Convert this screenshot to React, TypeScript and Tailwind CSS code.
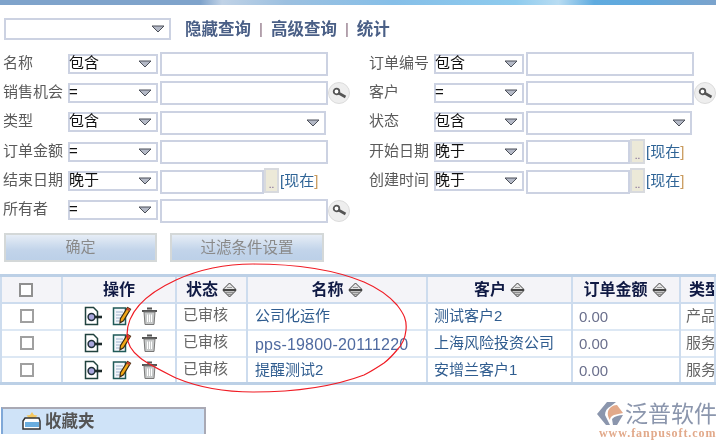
import React from "react";

const cjk = "font-['Liberation_Sans','Noto_Sans_CJK_SC',sans-serif]";

const Arrow = () => (
  <svg width="14" height="8" viewBox="0 0 14 8" className="shrink-0">
    <path d="M1 1h12L7 7z" fill="#b4b9c6" stroke="#4b4f58" strokeWidth="1" />
  </svg>
);

const Select = ({ value }: { value: string }) => (
  <div className="-mt-[1px] flex h-[20px] w-[90px] shrink-0 items-center justify-between border-2 border-[#ccd2e2] bg-white pr-[4px] text-[15px] leading-none text-[#111]">
    <span className="-ml-[1px] -mt-[3px]">{value}</span>
    <Arrow />
  </div>
);

const KeyBtn = () => (
  <div className="flex h-[22px] w-[22px] shrink-0 items-center justify-center rounded-full border border-[#dcdcdc] bg-[#eeeeee]">
    <svg width="15" height="13" viewBox="0 0 15 13">
      <circle cx="4.500" cy="4.500" r="2.800" fill="#fff" stroke="#555" strokeWidth="1.800" />
      <path d="M6.500 6l7 4" stroke="#555" strokeWidth="2.600" />
    </svg>
  </div>
);

const DateBtn = () => (
  <>
    <div className="-mt-[2px] flex h-[25px] w-[15px] shrink-0 items-end justify-center border-2 border-[#d8dade] bg-[#ece9d8] text-[10px] leading-[12px] text-[#71598a]">..</div>
    <span className="ml-[1px] text-[15px] text-[#2f6496]">
      [现在<span className="text-[#c99a5c]">]</span>
    </span>
  </>
);

type Row = { label: string; op: string; kind?: "key" | "drop" | "date" };

const Field = ({ label, op, kind }: Row) => (
  <div className="flex h-[24px] items-center">
    <span className="-mt-[4px] w-[65px] shrink-0 whitespace-nowrap text-[15px] leading-none text-[#5a5a5a]">{label}</span>
    <Select value={op} />
    <div
      className={`ml-[2px] flex h-[24px] shrink-0 items-center justify-end border-2 border-[#ccd2e2] bg-white pr-[4px] ${
        kind === "date" ? "w-[104px]" : kind === "drop" ? "w-[166px]" : "w-[168px]"
      }`}
    >
      {kind === "drop" && <Arrow />}
    </div>
    {kind === "key" && <KeyBtn />}
    {kind === "date" && <DateBtn />}
  </div>
);

const left: Row[] = [
  { label: "名称", op: "包含" },
  { label: "销售机会", op: "=", kind: "key" },
  { label: "类型", op: "包含", kind: "drop" },
  { label: "订单金额", op: "=" },
  { label: "结束日期", op: "晚于", kind: "date" },
  { label: "所有者", op: "=", kind: "key" },
];

const right: Row[] = [
  { label: "订单编号", op: "包含" },
  { label: "客户", op: "=", kind: "key" },
  { label: "状态", op: "包含", kind: "drop" },
  { label: "开始日期", op: "晚于", kind: "date" },
  { label: "创建时间", op: "晚于", kind: "date" },
];

const Sort = () => (
  <svg width="15" height="16" viewBox="0 0 15 16" className="ml-[4px] inline-block shrink-0">
    <path d="M7.500 1L14 7.500H1z" fill="#e4e4e4" stroke="#444" />
    <path d="M7.500 15L14 8.500H1z" fill="#c4c4c4" stroke="#444" />
    <path d="M5 5.500h5M3.500 10.500h8M5 12.500h5" stroke="#777" strokeWidth="0.700" />
  </svg>
);

const ViewIcon = () => (
  <svg width="20" height="20" viewBox="0 0 20 20" className="block">
    <path d="M2.500 1.500h8l4 4v13h-12z" fill="#fff" stroke="#20423e" strokeWidth="1.500" />
    <circle cx="8.500" cy="11" r="3.400" fill="#a9a6dc" stroke="#20303a" strokeWidth="1.500" />
    <path d="M12 11h7" stroke="#1d2a2a" strokeWidth="2.600" />
  </svg>
);

const EditIcon = () => (
  <svg width="20" height="20" viewBox="0 0 20 20" className="block">
    <path d="M1.500 2h12v16.500h-12z" fill="#f4f7fb" stroke="#1f5a58" strokeWidth="1.500" />
    <path d="M4 6h7M4 9h6M4 12h5M4 15h5" stroke="#9db2cc" />
    <path d="M15.500 1.500l3 1.800-7 11.500-3.500 2 .4-4z" fill="#f2a818" stroke="#3a2a10" strokeWidth="1.200" />
    <path d="M15.500 1.500l3 1.800-1.200 2-3-1.800z" fill="#c8452c" />
  </svg>
);

const TrashIcon = () => (
  <svg width="17" height="20" viewBox="0 0 17 20" className="block">
    <path d="M6 2.500h5M1 5h15" stroke="#555" strokeWidth="2" />
    <path d="M3 6h11l-1 12.500H4z" fill="#c6c8c8" stroke="#777" />
    <path d="M6.500 8.500v7.500M8.500 8.500v7.500M10.500 8.500v7.500" stroke="#fff" />
  </svg>
);

const rows = [
  { name: "公司化运作", customer: "测试客户2", type: "产品", nameClass: "text-[#2f5c8f]" },
  { name: "pps-19800-20111220", customer: "上海风险投资公司", type: "服务", nameClass: "text-[#4f6aa0] text-[16px] tracking-[0.2px] pt-[3px]" },
  { name: "提醒测试2", customer: "安增兰客户1", type: "服务", nameClass: "text-[#2f5c8f]" },
];

const th = "border-x-2 border-[#cddcee] pt-[1px] font-bold text-[#101a44] text-[16px]";
const td = "border-x-2 border-[#cddcee]";

export default function App() {
  return (
    <div className={`relative h-[446px] w-[727px] overflow-hidden bg-white blur-[0.4px] ${cjk}`}>
      <div className="w-[716px]">
        <div className="h-[5px] bg-[linear-gradient(90deg,#7fa3cb_0%,#7fa3cb_28%,#c0d2e6_31%,#9cc0e0_40%,#86bfe8_55%,#8ecbee_72%,#b8dcf2_78%,#5fabdf_83%,#62a8dc_90%,#7ba3cc_100%)]" />

        <div className="mt-[13px] flex h-[22px] items-center pl-[4px]">
          <div className="flex h-[22px] w-[167px] items-center justify-end border-2 border-[#ccd2e2] pr-[4px]">
            <Arrow />
          </div>
          <div className="ml-[14px] flex items-center text-[16.500px] font-bold text-[#4a5f86]">
            <span>隐藏查询</span>
            <span className="mx-[8px] text-[15px] font-normal text-[#8a6f80]">|</span>
            <span>高级查询</span>
            <span className="mx-[8px] text-[15px] font-normal text-[#8a6f80]">|</span>
            <span>统计</span>
          </div>
        </div>

        <div className="mt-[12px] flex h-[176px] pl-[3px]">
          <div className="flex w-[369px] flex-col gap-[5.400px]">
            {left.map((f) => (
              <Field key={f.label} {...f} />
            ))}
          </div>
          <div className="flex flex-col gap-[5.400px]">
            {right.map((f) => (
              <Field key={f.label} {...f} />
            ))}
          </div>
        </div>

        <div className="mt-[5px] flex gap-[13px] pl-[4px]">
          <button className="h-[29px] w-[153px] border-2 border-[#d4d8d8] bg-[linear-gradient(180deg,#e6edf6_0%,#c2d4ea_60%,#bcd0e8_100%)] text-[15px] text-[#8a8a8a]">确定</button>
          <button className="h-[29px] w-[154px] border-2 border-[#d4d8d8] bg-[linear-gradient(180deg,#e6edf6_0%,#c2d4ea_60%,#bcd0e8_100%)] text-[15.500px] text-[#8a8a8a]">过滤条件设置</button>
        </div>

        <table className="mt-[12px] w-[716px] table-fixed border-collapse border-y-[3px] border-[#bcd0e6] text-[15px] leading-[20px]">
          <colgroup>
            <col className="w-[61px]" />
            <col className="w-[114px]" />
            <col className="w-[71px]" />
            <col className="w-[180px]" />
            <col className="w-[145px]" />
            <col className="w-[108px]" />
            <col />
          </colgroup>
          <thead>
            <tr className="h-[27px] border-b-2 border-[#cddcee] bg-[#f4f4f8]">
              <th className={th}>
                <div className="ml-[17px] h-[14px] w-[14px] border-2 border-[#909090] bg-white" />
              </th>
              <th className={th}>操作</th>
              <th className={th}>
                <div className="flex items-center justify-center">状态<Sort /></div>
              </th>
              <th className={th}>
                <div className="flex items-center justify-center">名称<Sort /></div>
              </th>
              <th className={th}>
                <div className="flex items-center justify-center">客户<Sort /></div>
              </th>
              <th className={th}>
                <div className="flex items-center justify-center pr-[2px]">订单金额<Sort /></div>
              </th>
              <th className={`${th} overflow-hidden whitespace-nowrap pl-[8px] text-left`}>类型</th>
            </tr>
          </thead>
          <tbody>
            {rows.map((r) => (
              <tr key={r.name} className="h-[27px] border-b-2 border-[#dde8f4] last:border-b-0">
                <td className={td}>
                  <div className="ml-[18px] h-[14px] w-[14px] border-2 border-[#a0a0a0]" />
                </td>
                <td className={td}>
                  <div className="flex items-center justify-center gap-[9px] pl-[2px]">
                    <ViewIcon />
                    <EditIcon />
                    <TrashIcon />
                  </div>
                </td>
                <td className={`${td} pb-[2px] pl-[6px] text-[#666]`}>已审核</td>
                <td className={`${td} whitespace-nowrap pl-[7px] ${r.nameClass}`}>{r.name}</td>
                <td className={`${td} whitespace-nowrap pl-[6px] text-[#2f5c8f]`}>{r.customer}</td>
                <td className={`${td} pl-[6px] pt-[2px] text-[#6a6f8c]`}>0.00</td>
                <td className={`${td} overflow-hidden whitespace-nowrap pl-[5px] text-[#666]`}>{r.type}</td>
              </tr>
            ))}
          </tbody>
        </table>

        <div className="ml-[1px] mt-[22px] flex h-[27px] w-[205px] items-center border-x-2 border-t-2 border-[#a9a9b4] border-l-[#7fa8d8] bg-[#cfe3f8] pl-[19px]">
          <svg width="20" height="20" viewBox="0 0 20 20" className="shrink-0">
            <path d="M10 0l2 3 3.500.500-2.500 2.500H7L4.500 3.500 8 3z" fill="#f4c860" />
            <path d="M3 6h14l1 3v8H1V9z" fill="#fff" stroke="#333" strokeWidth="1.500" />
            <path d="M3 10h14v5H3z" fill="#6aaee0" />
          </svg>
          <span className="ml-[3px] text-[16.500px] font-bold text-[#555]">收藏夹</span>
        </div>
      </div>

      {/* hand drawn ring over the table */}
      <svg width="727" height="446" viewBox="0 0 727 446" fill="none" className="pointer-events-none absolute left-0 top-0">
        <path
          d="M127 335C127 310 150 292 176 280C200 269 228 264 253 264C295 264 335 270 364 282C380 289 390 297 397 305C404 314 407 320 406 330C405 340 402 345 397 350C392 356 388 360 384 363C378 367 370 372 364 375C335 386 295 392 253 392C225 392 200 388 176 378C150 365 127 355 127 335Z"
          stroke="#f01c24"
          strokeWidth="1.200"
        />
      </svg>

      {/* logo */}
      <div className="absolute left-[597px] top-[402px] flex w-[120px] flex-col">
        <div className="flex items-center">
          <svg width="27" height="24" viewBox="0 0 27 24" className="shrink-0">
            <path d="M10 0h9l-5 4c-4 2-6 5-6 9l5 10H9L0 12z" fill="#8b96ad" />
            <path d="M20 3l6 8-9 2c-3 1-4 3-4 5-3-4-3-9 0-12 2-2 4-3 7-3z" fill="#e2a98a" />
            <path d="M26 13l-6 10h-4l-1-6c3-3 7-4 11-4z" fill="#8b96ad" />
          </svg>
          <span className="ml-[1px] whitespace-nowrap text-[23px] leading-none text-[#8b96ad]">泛普软件</span>
        </div>
        <span className="ml-[2px] mt-[1px] whitespace-nowrap font-['Liberation_Serif',serif] text-[12px] font-bold leading-none tracking-[0.950px] text-[#e2a98a]">www.fanpusoft.com</span>
      </div>
    </div>
  );
}
